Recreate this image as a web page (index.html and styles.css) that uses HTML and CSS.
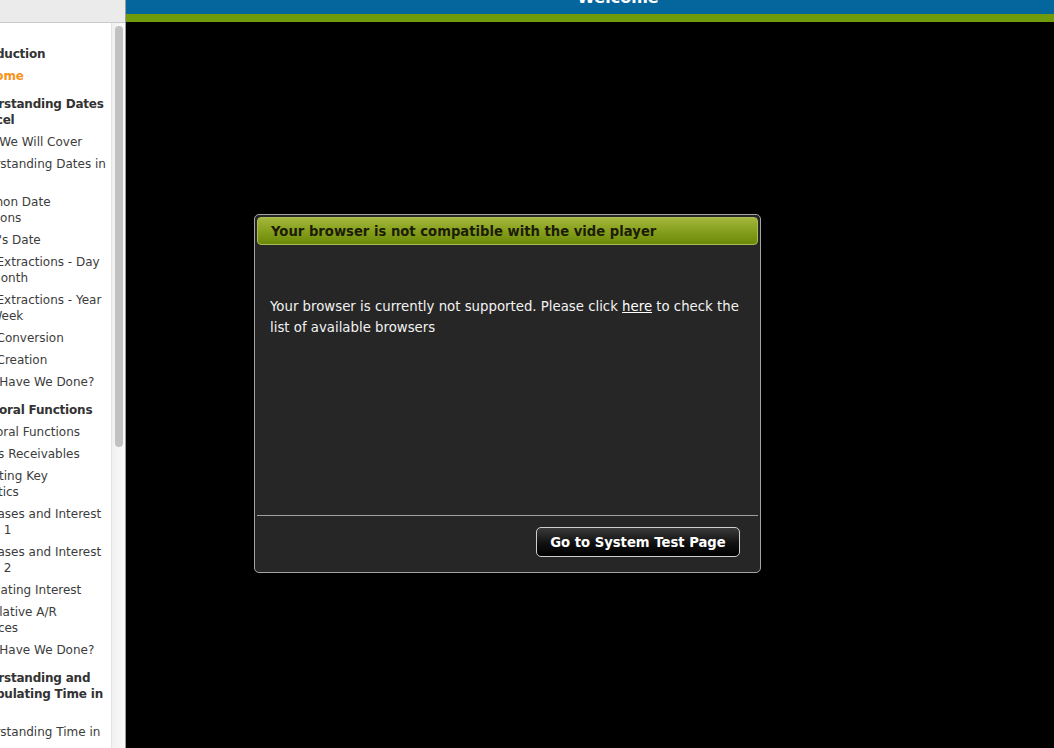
FILE: index.html
```html
<!DOCTYPE html>
<html lang="en">
<head>
<meta charset="utf-8">
<title>Welcome</title>
<link rel="stylesheet" href="styles.css">
</head>
<body>
<div class="app">
  <aside class="sidebar">
    <div class="side-top"></div>
    <div class="side-body">
      <nav class="toc">
        <div class="toc-inner">
          <div class="entry head first">Introduction</div>
          <div class="entry head current">Welcome</div>
          <div class="entry head">Understanding Dates in Excel</div>
          <div class="entry">What We Will Cover</div>
          <div class="entry">Understanding Dates in Excel</div>
          <div class="entry">Common Date Functions</div>
          <div class="entry">Today's Date</div>
          <div class="entry">Date Extractions - Day and Month</div>
          <div class="entry">Date Extractions - Year and Week</div>
          <div class="entry">Date Conversion</div>
          <div class="entry">Date Creation</div>
          <div class="entry">What Have We Done?</div>
          <div class="entry head">Temporal Functions</div>
          <div class="entry">Temporal Functions</div>
          <div class="entry">Claims Receivables</div>
          <div class="entry">Reporting Key Statistics</div>
          <div class="entry">Purchases and Interest Phase 1</div>
          <div class="entry">Purchases and Interest Phase 2</div>
          <div class="entry">Calculating Interest</div>
          <div class="entry">Cumulative A/R Balances</div>
          <div class="entry">What Have We Done?</div>
          <div class="entry head">Understanding and Manipulating Time in Excel</div>
          <div class="entry">Understanding Time in Excel</div>
        </div>
      </nav>
      <div class="scroll-track"><div class="scroll-thumb"></div></div>
    </div>
  </aside>
  <main class="stage">
    <header class="banner"><h1>Welcome</h1></header>
    <div class="accent"></div>
    <div class="player">
      <section class="dialog">
        <div class="dialog-head">Your browser is not compatible with the vide player</div>
        <div class="dialog-body">
          <p>Your browser is currently not supported. Please click <a href="#">here</a> to check the list of available browsers</p>
        </div>
        <div class="dialog-foot">
          <button class="btn" type="button">Go to System Test Page</button>
        </div>
      </section>
    </div>
  </main>
</div>
</body>
</html>
```
FILE: styles.css
```css
* { box-sizing: border-box; }
html, body {
  margin: 0;
  padding: 0;
  height: 100%;
  overflow: hidden;
  background: #000;
  font-family: "DejaVu Sans", Verdana, sans-serif;
}
.app {
  display: flex;
  height: 748px;
}
.sidebar {
  width: 126px;
  flex: none;
  display: flex;
  flex-direction: column;
  background: #fff;
  border-right: 1px solid #9c9c9c;
}
.side-top {
  height: 23px;
  flex: none;
  background: #ebebeb;
  border-bottom: 1px solid #c9c9c9;
}
.side-body {
  flex: 1;
  display: flex;
  min-height: 0;
}
.toc {
  flex: 1;
  overflow: hidden;
  min-width: 0;
}
.toc-inner {
  margin-left: -36px;
  width: 142px;
  padding-top: 20px;
}
.entry {
  font-size: 12px;
  line-height: 16px;
  padding: 3px 0;
  color: #3c3c3c;
}
.entry.head {
  font-weight: bold;
  color: #333;
  margin-top: 6px;
  letter-spacing: -0.2px;
}
.entry.head.first { margin-top: 0; }
.entry.head.current {
  color: #f7941d;
  margin-top: 0;
}
.scroll-track {
  width: 14px;
  flex: none;
  background: linear-gradient(to right, #f0f0f0, #fafafa);
  border-left: 1px solid #e4e4e4;
  padding: 3px 0 0 3px;
}
.scroll-thumb {
  width: 8px;
  height: 421px;
  border-radius: 4px;
  background: #c1c1c1;
}
.stage {
  flex: 1;
  display: flex;
  flex-direction: column;
  background: #000;
  min-width: 0;
}
.banner {
  height: 14px;
  flex: none;
  background: #05669e;
  overflow: hidden;
  text-align: center;
  padding-left: 56px;
}
.banner h1 {
  margin: -12px 0 0;
  font-size: 16px;
  line-height: 20px;
  font-weight: bold;
  color: #fff;
}
.accent {
  height: 8px;
  flex: none;
  background: #709b0d;
}
.player {
  flex: 1;
  padding: 192px 0 0 128px;
}
.dialog {
  width: 507px;
  height: 359px;
  border: 1px solid #a3a3a3;
  border-radius: 5px;
  background: #262626;
  padding: 2px;
  display: flex;
  flex-direction: column;
}
.dialog-head {
  height: 28px;
  flex: none;
  border: 1px solid #aabb55;
  border-radius: 4px;
  background: linear-gradient(to bottom, #a2b63c 0%, #89a21f 45%, #6a8908 100%);
  padding-left: 13px;
  font-size: 13.2px;
  line-height: 27px;
  font-weight: bold;
  color: #1c1c06;
  white-space: nowrap;
  overflow: hidden;
}
.dialog-body {
  flex: 1;
  padding: 51px 13px 0 13px;
}
.dialog-body p {
  margin: 0;
  font-size: 13.3px;
  line-height: 21px;
  color: #f2f2f2;
}
.dialog-body a {
  color: #fff;
  text-decoration: underline;
}
.dialog-foot {
  flex: none;
  height: 55px;
  border-top: 1px solid #a0a0a0;
  display: flex;
  justify-content: flex-end;
  align-items: flex-start;
  padding: 11px 18px 0 0;
}
.btn {
  width: 204px;
  height: 30px;
  border: 1px solid #cfcfcf;
  border-radius: 5px;
  background: linear-gradient(to bottom, #3a3a3a 0%, #111 55%, #000 100%);
  color: #fff;
  font-family: "DejaVu Sans", Verdana, sans-serif;
  font-size: 13.2px;
  font-weight: bold;
  padding: 0;
  cursor: pointer;
}
```
